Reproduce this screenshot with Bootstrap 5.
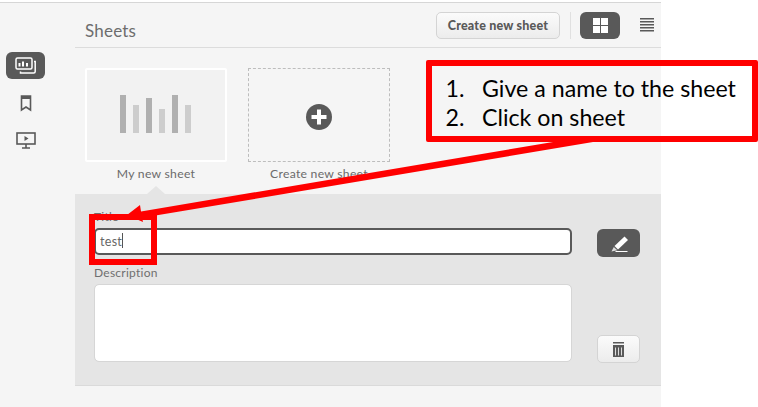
<!DOCTYPE html>
<html lang="en">
<head>
<meta charset="utf-8">
<title>Sheets</title>
<link href="https://cdn.jsdelivr.net/npm/bootstrap@5.3.0/dist/css/bootstrap.min.css" rel="stylesheet">
<style>
html,body{height:407px;overflow:hidden;background:#fff}
body{font-family:"Lato","Noto Sans",sans-serif;color:#666;position:relative}
.app-shell{width:661px;height:407px;margin-top:2px;background:#f5f5f5;border-top:1px solid #d6d6d6}
.side-rail{width:75px;padding:49px 0 0 6px;gap:10px}
.rail-btn{width:39px;height:27px;border-radius:6px;color:#595959}
.rail-btn.is-on{background:#595959;color:#fff;margin-bottom:1px}
.top-bar{height:45px;border-bottom:1px solid #dcdcdc;padding:9px 7px 0 10px}
.top-bar h1{font-size:17px;font-weight:400;color:#6d6d6d;margin:9px 0 0;letter-spacing:.2px}
.act-btn{height:27px;border:1px solid #d4d4d4;border-radius:5px;background:linear-gradient(#fbfbfb,#ececec);color:#595959;font-size:12.5px;font-weight:900;padding:2px 0 0;width:124px;letter-spacing:.2px}
.v-sep{width:1px;height:27px;background:#e0e0e0;margin:0 9px 0 10px}
.dark-btn{background:#595959;border:0;border-radius:6px;color:#fff}
.grid-btn{width:40px;height:27px;margin-right:20px}
.list-ico{margin-top:6px}
.thumb-row{padding:20px 0 0 10px;gap:21px;height:146px}
.sheet-item{width:142px}
.sheet-box{height:94px;display:flex;align-items:center;justify-content:center}
.sheet-box.is-sheet{background:#f2f2f2;border:2px solid #fff;border-radius:2px;padding:0 1px 2px 0}
.sheet-box.is-new{border:1px dashed #bdbdbd;padding-top:3px}
.sheet-name{font-size:12.2px;color:#6b6b6b;text-align:center;margin-top:4px;letter-spacing:.27px;line-height:16px}
.edit-panel{height:192px;background:#e5e5e5;border-bottom:1px solid #dadada;padding:16px 21px 0 19px;position:relative}
.edit-panel::before{content:"";position:absolute;left:72px;top:-8px;border:9px solid transparent;border-top:0;border-bottom:8px solid #e5e5e5}
.form-stack{width:478px}
.field-label{font-size:12px;line-height:14px;color:#6f6f6f;letter-spacing:.25px;margin-bottom:4px;display:block}
.title-field.form-control{height:27px;border:2px solid #595959;border-radius:5px;padding:0 4px;font-size:12.5px;color:#666;font-family:inherit;box-shadow:none;letter-spacing:.3px}
.desc-field.form-control{height:78px;border:1px solid #d6d6d6;border-radius:5px;resize:none;box-shadow:none}
.desc-wrap{margin-top:11px}
.text-caret{position:absolute;left:28px;top:5px;width:1px;height:15px;background:#555}
.tools{width:43px;margin-left:25px}
.tool-edit{height:28px;width:43px;margin-top:19px}
.tool-trash{height:28px;width:43px;border:1px solid #d4d4d4;border-radius:5px;background:linear-gradient(#fbfbfb,#ececec);margin-top:78px}
.callout{position:absolute;left:426px;top:60px;width:332px;height:82px;border:6px solid #f00;border-radius:2px;font-family:"Lato","Carlito",sans-serif;font-size:23.2px;color:#000;line-height:28.5px;padding:8px 0 0 13.500px;z-index:3}
.callout ol{margin:0;padding:0;list-style:none}
.callout li{display:flex}
.callout li span:first-child{width:36.500px}
.mark-box{position:absolute;left:89px;top:214px;width:68px;height:51px;border:6px solid #f00;z-index:3}
.arrow-layer{position:absolute;left:0;top:0;z-index:2;pointer-events:none}
</style>
</head>
<body>
<div class="app-shell d-flex">
  <nav class="side-rail d-flex flex-column flex-shrink-0">
    <div class="rail-btn is-on d-flex align-items-center justify-content-center">
      <svg width="22" height="18" viewBox="0 0 22 18" fill="none" stroke="currentColor" stroke-width="1.5"><rect x="1" y="1" width="16" height="11" rx="1.5"/><path d="M19 4.500h1.200v10a1.500 1.500 0 0 1-1.500 1.500H5.500v-1.500"/><path d="M4.500 9.500V6M8 9.500V4.500M12 9.500V6" stroke-width="2"/></svg>
    </div>
    <div class="rail-btn d-flex align-items-center justify-content-center">
      <svg width="12" height="17" viewBox="0 0 12 17" fill="none" stroke="currentColor" stroke-width="1.600"><path d="M1.500 1h9v14L6 12l-4.500 3z"/><path d="M1.500 2.500h9" stroke-width="3"/></svg>
    </div>
    <div class="rail-btn d-flex align-items-center justify-content-center">
      <svg width="20" height="17" viewBox="0 0 20 17" fill="none" stroke="currentColor" stroke-width="1.600"><rect x="1" y="1" width="18" height="11"/><path d="M10 12v4M6 16h8"/><path d="M8.500 4v5l4-2.500z" fill="currentColor" stroke="none"/></svg>
    </div>
  </nav>
  <main class="flex-grow-1">
    <header class="top-bar d-flex align-items-start">
      <h1 class="me-auto">Sheets</h1>
      <button class="act-btn" type="button">Create new sheet</button>
      <div class="v-sep"></div>
      <button class="dark-btn grid-btn d-flex align-items-center justify-content-center" type="button" aria-label="Grid view">
        <svg width="15" height="15" viewBox="0 0 15 15" fill="#fff"><rect width="7" height="7"/><rect x="8" width="7" height="7"/><rect y="8" width="7" height="7"/><rect x="8" y="8" width="7" height="7"/></svg>
      </button>
      <svg class="list-ico" width="14" height="14" viewBox="0 0 14 14" fill="#595959"><rect width="14" height="1.500"/><rect y="3" width="14" height="1.500"/><rect y="6" width="14" height="1.500"/><rect y="9" width="14" height="1.500"/><rect y="12" width="14" height="1.500"/></svg>
    </header>
    <section class="thumb-row d-flex">
      <div class="sheet-item">
        <div class="sheet-box is-sheet">
          <svg width="71" height="38" viewBox="0 0 71 38"><g fill="#b0b0b0"><rect width="6" height="38"/><rect x="26" y="3" width="6" height="35"/><rect x="52" width="6" height="38"/></g><g fill="#cdcdcd"><rect x="13" y="10" width="6" height="28"/><rect x="39" y="14" width="6" height="24"/><rect x="65" y="10" width="6" height="28"/></g></svg>
        </div>
        <div class="sheet-name">My new sheet</div>
      </div>
      <div class="sheet-item">
        <div class="sheet-box is-new">
          <svg width="26" height="26" viewBox="0 0 26 26"><circle cx="13" cy="13" r="13" fill="#595959"/><path d="M13 5.500v15M5.500 13h15" stroke="#fff" stroke-width="4"/></svg>
        </div>
        <div class="sheet-name">Create new sheet</div>
      </div>
    </section>
    <section class="edit-panel d-flex">
      <div class="form-stack">
        <label class="field-label" for="sheetTitle">Title</label>
        <div class="position-relative">
          <input id="sheetTitle" class="form-control title-field" type="text" value="test">
          <span class="text-caret"></span>
        </div>
        <div class="desc-wrap">
          <label class="field-label" for="sheetDesc">Description</label>
          <textarea id="sheetDesc" class="form-control desc-field"></textarea>
        </div>
      </div>
      <div class="tools d-flex flex-column">
        <button class="dark-btn tool-edit d-flex align-items-center justify-content-center p-0" type="button" aria-label="Edit">
          <svg width="18" height="17" viewBox="0 0 18 17" fill="#fff"><path d="M14.500 1.500 18 5 8 14.500 4.500 11z"/><path d="M3.800 12 7.300 15.300 1.500 16.500z" opacity=".8"/><rect x="5.500" y="16" width="12" height="1"/></svg>
        </button>
        <button class="tool-trash d-flex align-items-center justify-content-center p-0" type="button" aria-label="Delete">
          <svg width="11" height="15" viewBox="0 0 11 15" fill="#595959"><rect width="11" height="1.500"/><rect y="3" width="11" height="12"/><path d="M2.500 5.500v8M5.500 5.500v8M8.500 5.500v8" stroke="#ddd" stroke-width="1"/></svg>
        </button>
      </div>
    </section>
  </main>
</div>
<svg class="arrow-layer" width="758" height="407" viewBox="0 0 758 407"><path d="M593 142H553L141 211.500 140 205 127 215 143 222 142 217.800z" fill="#f00"/></svg>
<div class="callout"><ol><li><span>1.</span><span>Give a name to the sheet</span></li><li><span>2.</span><span>Click on sheet</span></li></ol></div>
<div class="mark-box"></div>
</body>
</html>
